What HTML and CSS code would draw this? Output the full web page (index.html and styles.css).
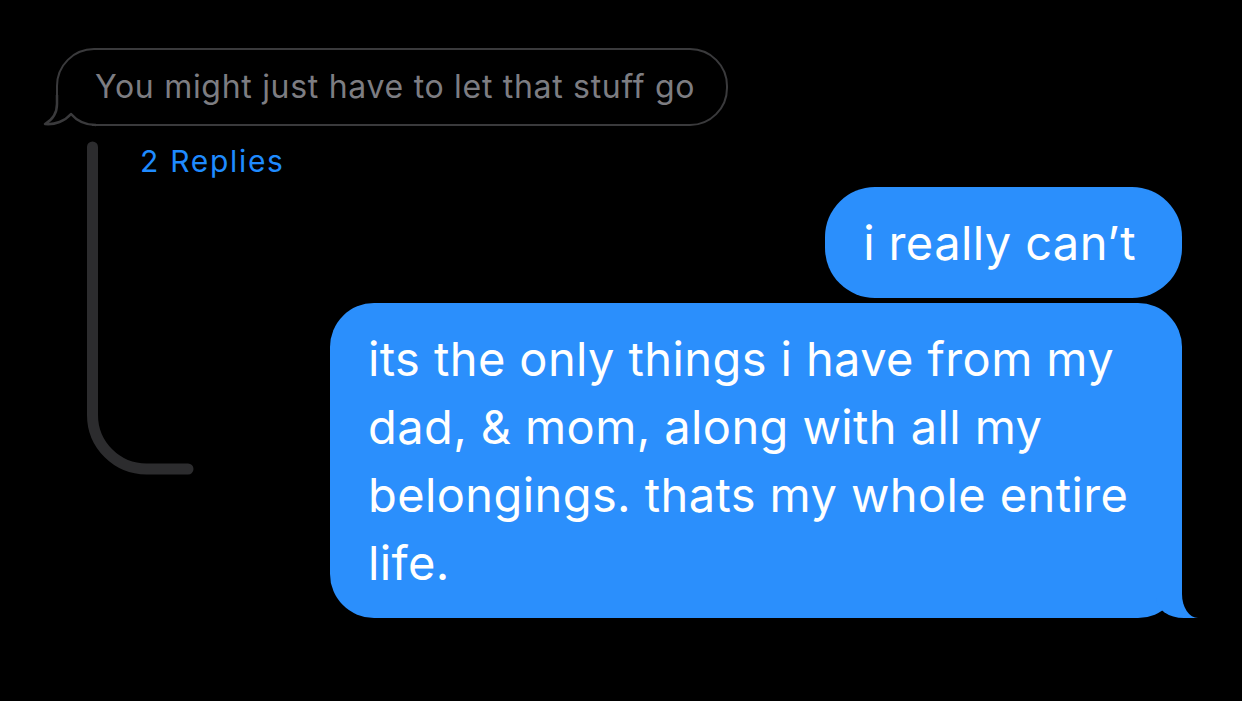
FILE: index.html
```html
<!doctype html>
<html lang="en">
    <head>
        <meta charset="UTF-8" />
        <meta name="viewport" content="width=device-width, initial-scale=1.0" />
        <title>Thread</title>
        <link rel="stylesheet" href="styles.css">
    </head>
    <body>
        <main class="thread">
            <div class="quoted-row">
                <p class="bubble quoted">
                    You might just have to let that stuff go
                    <svg class="quoted-tail" viewBox="0 0 60 40" width="60" height="40">
                        <rect x="10" y="7" width="42" height="33" fill="#000" />
                        <path d="M17 7 V16 C17 26 12 32 5 36 C15 37 25 33 31 26 C37 33 46 37 56 37" fill="none" stroke="#3a3a3c" stroke-width="2.5" stroke-linejoin="round" />
                    </svg>
                </p>
            </div>

            <section class="replies">
                <svg class="reply-line" viewBox="0 0 120 343" width="120" height="343">
                    <path d="M12.5 10 V278 A54 54 0 0 0 66.5 332 H108" fill="none" stroke="#2c2c2e" stroke-width="11" stroke-linecap="round" />
                </svg>
                <div class="reply-col">
                    <span class="reply-count">2 Replies</span>
                    <p class="bubble sent">i really can’t</p>
                    <p class="bubble sent last">its the only things i have from my dad, &amp; mom, along with all my belongings. thats my whole entire life.</p>
                </div>
            </section>
        </main>
    </body>
</html>
```

FILE: styles.css
```css
html,
body {
    margin: 0;
    padding: 0;
    background-color: #000;
    font-family: Inter, "Noto Sans", sans-serif;
}

.thread {
    padding: 48px 60px 0 56px;
}

.bubble {
    margin: 0;
}

/* grey quoted message */
.quoted {
    position: relative;
    display: inline-block;
    border: 2px solid #3a3a3c;
    border-radius: 38px 38px 38px 0;
    padding: 0 31px 0 37px;
    font-size: 32px;
    letter-spacing: 0.7px;
    line-height: 74px;
    color: #7d7d82;
}

.quoted-tail {
    position: absolute;
    left: -18px;
    bottom: -4px;
}

.replies {
    display: grid;
    grid-template-columns: 84px 1fr;
    margin-top: 11px;
}

.reply-line {
    grid-column: 1;
    grid-row: 1;
    margin-left: 24px;
}

.reply-col {
    grid-column: 2;
    grid-row: 1;
    display: flex;
    flex-direction: column;
    align-items: flex-start;
}

.reply-count {
    margin-top: 6px;
    font-size: 30px;
    letter-spacing: 1.7px;
    line-height: 36px;
    color: #1f8bff;
}

.sent {
    position: relative;
    box-sizing: border-box;
    align-self: flex-end;
    background-color: #2b8ffc;
    color: #fff;
    font-size: 47px;
    letter-spacing: 0.4px;
    line-height: 68px;
    padding: 22px 46px 21px 38px;
    border-radius: 50px;
}

.sent + .sent {
    margin-top: 5px;
}

.reply-count + .sent {
    margin-top: 8px;
}

.sent.last {
    max-width: 852px;
    border-radius: 44px;
}

.sent.last::before {
    content: "";
    position: absolute;
    right: -18px;
    bottom: 0;
    width: 44px;
    height: 46px;
    background-color: #2b8ffc;
    border-bottom-left-radius: 28px 20px;
}

.sent.last::after {
    content: "";
    position: absolute;
    right: -30px;
    bottom: 0;
    width: 30px;
    height: 46px;
    background-color: #000;
    border-bottom-left-radius: 16px 24px;
}
```
